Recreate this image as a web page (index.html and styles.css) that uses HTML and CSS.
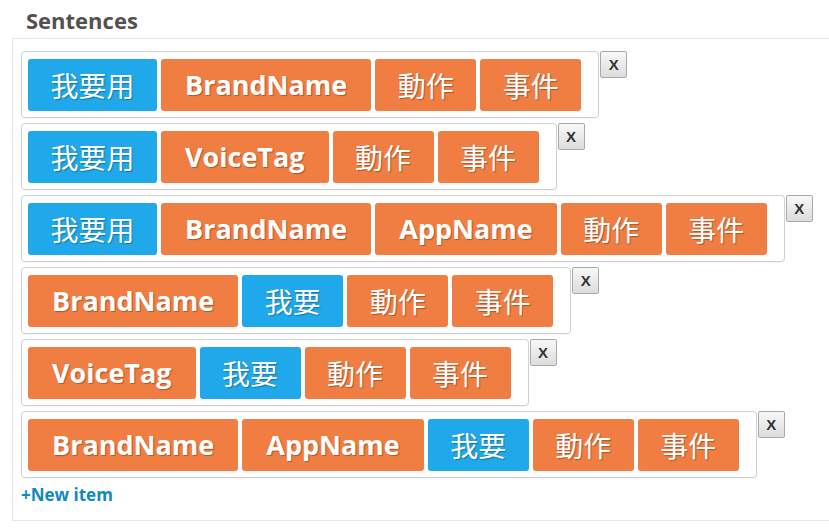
FILE: index.html
```html
<!DOCTYPE html>
<html>
<head>
<meta charset="utf-8">
<link rel="stylesheet" href="styles.css">
</head>
<body>
<h3 class="title">Sentences</h3>
<div class="panel">
  <div class="line">
    <div class="sentence">
      <span class="tag blue cjk">我要用</span><span class="tag orange">BrandName</span><span class="tag orange cjk">動作</span><span class="tag orange cjk">事件</span>
    </div>
    <button class="remove">X</button>
  </div>
  <div class="line">
    <div class="sentence">
      <span class="tag blue cjk">我要用</span><span class="tag orange">VoiceTag</span><span class="tag orange cjk">動作</span><span class="tag orange cjk">事件</span>
    </div>
    <button class="remove">X</button>
  </div>
  <div class="line">
    <div class="sentence">
      <span class="tag blue cjk">我要用</span><span class="tag orange">BrandName</span><span class="tag orange">AppName</span><span class="tag orange cjk">動作</span><span class="tag orange cjk">事件</span>
    </div>
    <button class="remove">X</button>
  </div>
  <div class="line">
    <div class="sentence">
      <span class="tag orange">BrandName</span><span class="tag blue cjk">我要</span><span class="tag orange cjk">動作</span><span class="tag orange cjk">事件</span>
    </div>
    <button class="remove">X</button>
  </div>
  <div class="line">
    <div class="sentence">
      <span class="tag orange">VoiceTag</span><span class="tag blue cjk">我要</span><span class="tag orange cjk">動作</span><span class="tag orange cjk">事件</span>
    </div>
    <button class="remove">X</button>
  </div>
  <div class="line">
    <div class="sentence">
      <span class="tag orange">BrandName</span><span class="tag orange">AppName</span><span class="tag blue cjk">我要</span><span class="tag orange cjk">動作</span><span class="tag orange cjk">事件</span>
    </div>
    <button class="remove">X</button>
  </div>
  <a class="new-item" href="#">+New item</a>
</div>
</body>
</html>
```

FILE: styles.css
```css
html, body {
  margin: 0;
  padding: 0;
  background: #ffffff;
}

body {
  font-family: "Open Sans", "Noto Sans CJK TC", sans-serif;
  overflow: hidden;
}

.title {
  margin: 0;
  padding: 6px 0 0 26px;
  height: 32px;
  font-size: 22px;
  font-weight: 700;
  line-height: 28px;
  color: #555050;
}

.panel {
  margin-left: 12px;
  margin-right: -20px;
  border: 1px solid #e6e6e6;
  padding: 12px 8px 0 8px;
  height: 469px;
}

.line {
  display: flex;
  align-items: flex-start;
  margin-bottom: 5px;
}

.sentence {
  display: flex;
  gap: 4px;
  border: 1px solid #cfcfcf;
  border-radius: 4px;
  padding: 7px 17px 6px 6px;
  box-shadow: 0 1px 1px rgba(0, 0, 0, 0.04);
}

.tag {
  display: block;
  height: 52px;
  line-height: 52px;
  padding: 0 24px;
  border-radius: 3px;
  font-size: 27px;
  font-weight: 700;
  color: #ffffff;
  text-shadow: 1px 1px 1px rgba(0, 0, 0, 0.3);
}

.tag.cjk {
  font-family: "Noto Sans CJK TC", sans-serif;
  font-weight: 400;
  font-size: 28px;
  padding: 0 22.5px;
}

.blue {
  background: #1fa8ea;
}

.orange {
  background: #f07d41;
}

.remove {
  margin: 0 0 0 1px;
  width: 27px;
  height: 27px;
  padding: 0;
  border: 1px solid #a9a9a9;
  border-radius: 2px;
  background: linear-gradient(#f8f8f8, #dcdcdc);
  font-family: "Liberation Sans", Arial, sans-serif;
  font-size: 15px;
  font-weight: 700;
  color: #333333;
  line-height: 25px;
}

.new-item {
  display: block;
  margin-top: 6px;
  font-size: 17px;
  font-weight: 700;
  color: #1189bd;
  text-decoration: none;
  line-height: 22px;
}
```
